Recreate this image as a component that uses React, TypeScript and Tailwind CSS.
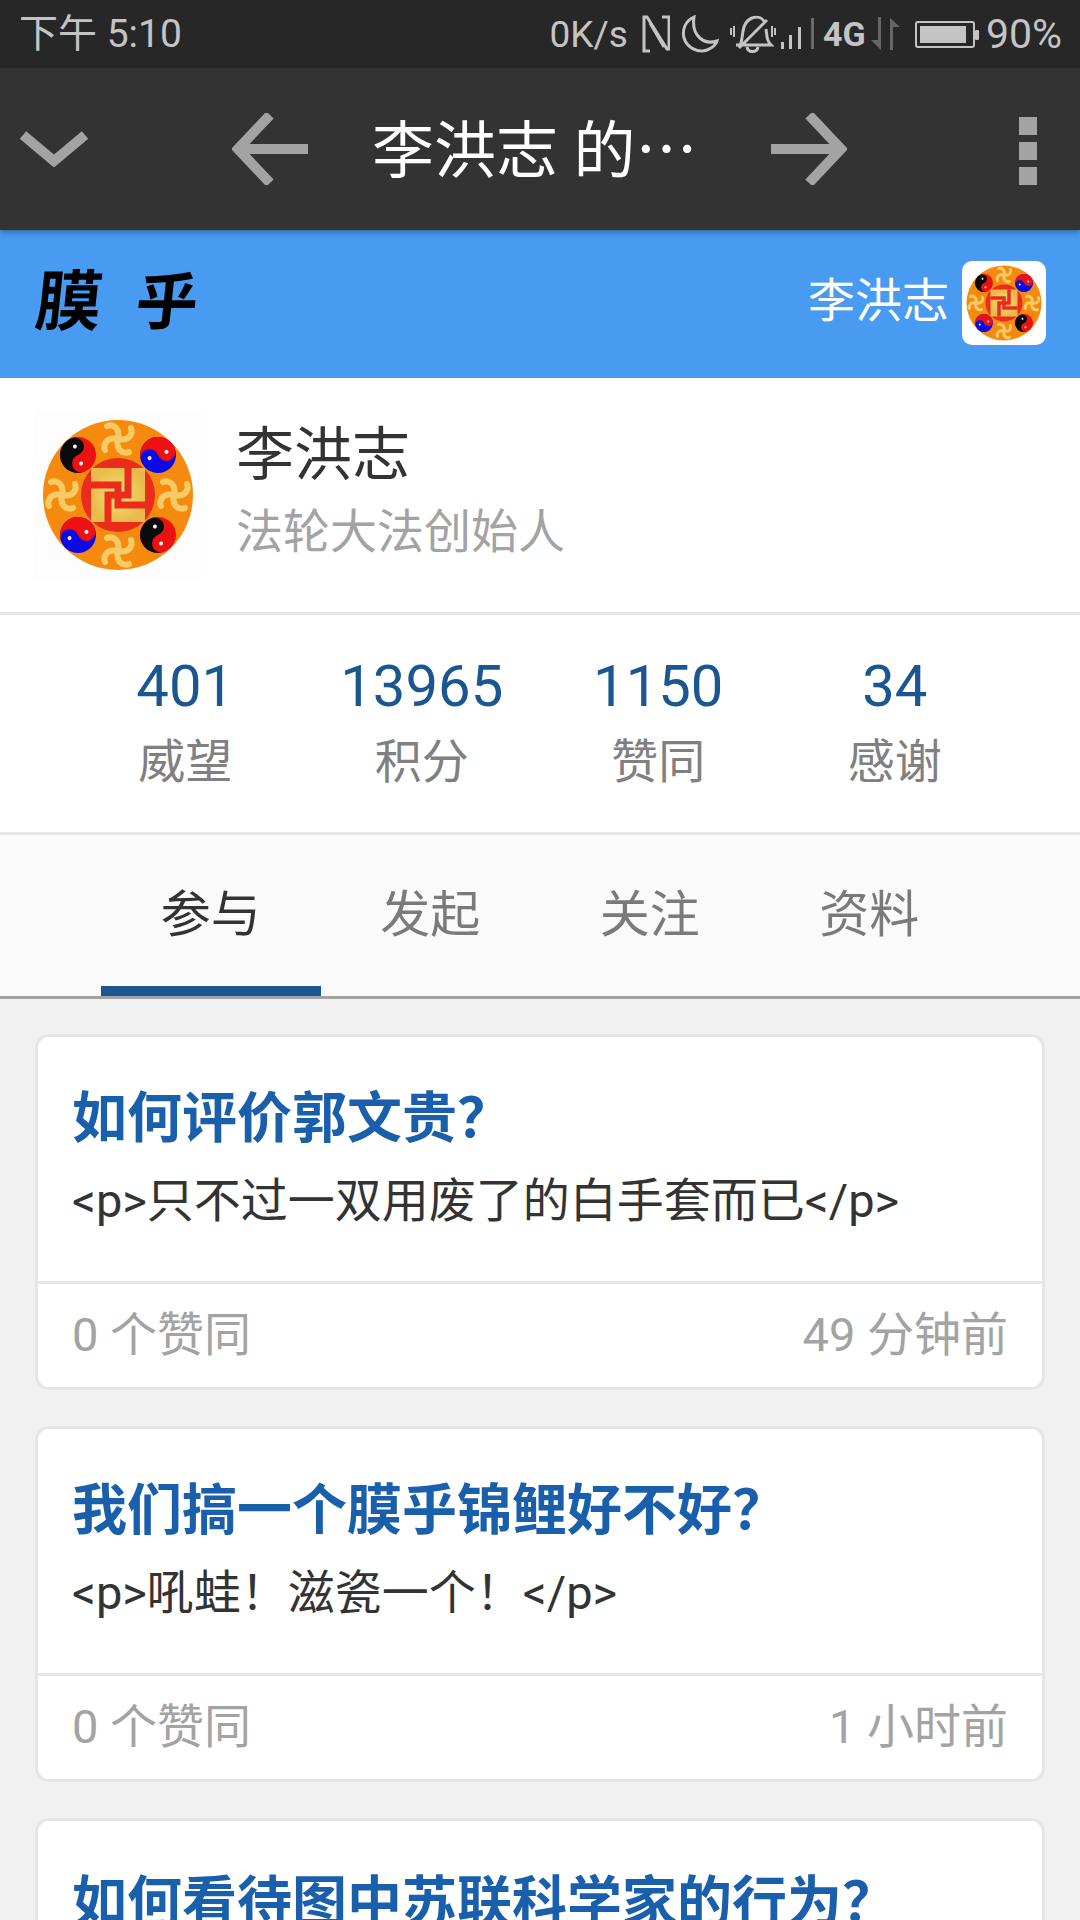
const fontStack = "font-['Roboto','Noto_Sans_CJK_SC',sans-serif]";

const Swirl = ({ x, y }: { x: number; y: number }) => (
  <g transform={`translate(${x} ${y})`} fill="none" stroke="#f6cb66" strokeWidth="6" strokeLinecap="round">
    {[0, 90, 180, 270].map((r) => (
      <path key={r} transform={`rotate(${r})`} d="M0 0 C1 -5 0 -10 -3 -12 C-6 -14 -9 -14 -11 -13" />
    ))}
  </g>
);

const Taiji = ({ x, y, rot, c1, c2 }: { x: number; y: number; rot: number; c1: string; c2: string }) => (
  <g transform={`translate(${x} ${y}) rotate(${rot}) scale(1 -1)`}>
    <circle r="18" fill={c2} />
    <path d="M0 -18 A18 18 0 0 0 0 18 A9 9 0 0 0 0 0 A9 9 0 0 1 0 -18 Z" fill={c1} />
    <circle cy="9" r="2" fill="#f4f4f4" />
    <circle cy="-9" r="2" fill="#f4f4f4" />
  </g>
);

// falun emblem, 168 box centred on 84,84
const Emblem = ({ className, viewBox = "0 0 168 168" }: { className: string; viewBox?: string }) => (
  <svg viewBox={viewBox} className={className}>
    <defs>
      <radialGradient id="gold">
        <stop offset="0%" stopColor="#f9e27a" />
        <stop offset="100%" stopColor="#e9bb4c" />
      </radialGradient>
    </defs>
    <circle cx="84" cy="84" r="75" fill="#f58a0e" />
    <Swirl x={84} y={28} />
    <Swirl x={140} y={84} />
    <Swirl x={84} y={140} />
    <Swirl x={28} y={84} />
    <Taiji x={44} y={44} rot={-20} c1="#0a0a0a" c2="#ee1111" />
    <Taiji x={124} y={124} rot={-20} c1="#0a0a0a" c2="#ee1111" />
    <Taiji x={124} y={44} rot={70} c1="#ee1111" c2="#0a0ae6" />
    <Taiji x={44} y={124} rot={70} c1="#ee1111" c2="#0a0ae6" />
    <circle cx="84" cy="84" r="37" fill="#ea2c1c" />
    <rect x="57" y="57" width="54" height="54" fill="url(#gold)" />
    <path
      d="M94 57 V84 H74 V111 M57 74 H84 V94 H111"
      fill="none"
      stroke="#ea2c1c"
      strokeWidth="7"
    />
  </svg>
);

const StatusIcons = () => (
  <>
    <svg viewBox="0 0 28 38" className="w-[28px] h-[38px] ml-[14px]" fill="none" stroke="#c4c4c4" strokeWidth="3">
      <path d="M8 36 H2 V2 H5 L25 34 H27 V2 H20 M8 8 L22 32" />
    </svg>
    <svg viewBox="0 0 38 38" className="w-[38px] h-[38px] ml-[11px]" fill="none" stroke="#c4c4c4" strokeWidth="3">
      <path d="M13 2 C4 6 1 15 3 23 C6 33 17 38 26 35 C31 33 35 30 36 26 C24 30 10 22 13 2 Z" />
    </svg>
    <svg viewBox="0 0 46 38" className="w-[46px] h-[38px] ml-[11px]" fill="none" stroke="#c4c4c4" strokeWidth="3">
      <path d="M10 30 C14 24 10 8 22 3 C28 1 33 3 35 8 M36 14 C37 22 37 26 41 30 H6 M17 32 C18 38 27 38 28 32 M9 33 L37 5" />
      <path d="M1 13 V20 M4 11 V22 M42 11 V22 M45 13 V20" strokeWidth="2" />
    </svg>
    <svg viewBox="0 0 34 32" className="w-[34px] h-[32px] ml-[5px]" fill="#c4c4c4">
      <rect x="0" y="24" width="3" height="7" />
      <rect x="8" y="17" width="3" height="14" />
      <rect x="17" y="9" width="3" height="22" />
      <rect x="30" y="0" width="3" height="31" fill="#6a6a6a" />
    </svg>
    <span className="ml-[8px] w-[42px] text-[34px] font-bold leading-none text-[#c4c4c4] whitespace-nowrap">4G</span>
    <svg viewBox="0 0 30 34" className="w-[30px] h-[34px] ml-[6px]" fill="#666666">
      <path d="M7 0 H10 V33 L0 23 H7 Z" />
      <path d="M19 1 L29 10 H22 V33 H19 Z" />
    </svg>
    <svg viewBox="0 0 64 27" className="w-[64px] h-[27px] ml-[14px]">
      <rect x="1" y="1" width="58" height="25" rx="2" fill="none" stroke="#c4c4c4" strokeWidth="2" />
      <rect x="5" y="5" width="46" height="17" fill="#c4c4c4" />
      <rect x="60" y="9" width="4" height="10" rx="1" fill="#c4c4c4" />
    </svg>
  </>
);

const Arrow = ({ flip }: { flip?: boolean }) => (
  <svg
    viewBox="0 0 76 72"
    className={flip ? "w-[76px] h-[72px] -scale-x-100" : "w-[76px] h-[72px]"}
    fill="none"
    stroke="#a3a3a3"
    strokeWidth="10"
  >
    <path d="M38 2 L6 36 L38 70 M6 36 H76" />
  </svg>
);

const stats = [
  { value: "401", label: "威望" },
  { value: "13965", label: "积分" },
  { value: "1150", label: "赞同" },
  { value: "34", label: "感谢" },
];

const tabs = ["参与", "发起", "关注", "资料"];

const posts = [
  { title: "如何评价郭文贵？", body: "<p>只不过一双用废了的白手套而已</p>", likes: "0 个赞同", time: "49 分钟前" },
  { title: "我们搞一个膜乎锦鲤好不好？", body: "<p>吼蛙！滋瓷一个！</p>", likes: "0 个赞同", time: "1 小时前" },
  { title: "如何看待图中苏联科学家的行为？", body: "", likes: "", time: "" },
];

export default function App() {
  return (
    <div className={`h-[1920px] w-[1080px] overflow-hidden bg-[#f1f1f1] ${fontStack}`}>
      <div className="h-[68px] bg-[#272727] flex items-center pl-[19px] pr-[18px] text-[#c4c4c4] text-[38px] leading-none">
        <span className="text-[39px]">下午 5:10</span>
        <span className="ml-auto text-[37px]">0K/s</span>
        <StatusIcons />
        <span className="ml-[7px] text-[41px]">90%</span>
      </div>

      <div className="relative z-10 h-[162px] bg-[#333333] flex items-center shadow-[0_2px_6px_rgba(0,0,0,0.35)]">
        <svg viewBox="0 0 68 36" className="w-[68px] h-[36px] ml-[20px]" fill="none" stroke="#a3a3a3" strokeWidth="10">
          <path d="M3 4 L34 30 L65 4" />
        </svg>
        <div className="ml-[144px]">
          <Arrow />
        </div>
        <span className="ml-[64px] w-[399px] pt-[6px] text-white text-[62px] leading-none whitespace-nowrap">李洪志 的⋯</span>
        <Arrow flip />
        <div className="ml-[172px] mt-[3px] flex flex-col gap-[7px]">
          <div className="w-[18px] h-[18px] bg-[#a3a3a3]" />
          <div className="w-[18px] h-[18px] bg-[#a3a3a3]" />
          <div className="w-[18px] h-[18px] bg-[#a3a3a3]" />
        </div>
      </div>

      <div className="h-[148px] bg-[#489bf1] flex items-center pl-[36px] pr-[34px] pb-[3px]">
        <span className="-skew-x-6 text-[66px] font-bold leading-none text-black">膜</span>
        <span className="ml-[34px] -skew-x-6 text-[62px] font-bold leading-none text-black">乎</span>
        <span className="ml-auto mb-[4px] text-white text-[47px] leading-none">李洪志</span>
        <div className="ml-[13px] w-[84px] h-[84px] rounded-[10px] bg-white flex items-center justify-center">
          <Emblem className="w-[76px] h-[76px]" viewBox="8 8 152 152" />
        </div>
      </div>

      <div className="h-[234px] bg-white flex items-center pl-[34px]">
        <div className="w-[168px] h-[168px] bg-[#fdfdfd]">
          <Emblem className="w-[168px] h-[168px]" />
        </div>
        <div className="ml-[34px] flex flex-col pb-[8px]">
          <span className="text-[58px] leading-[70px] text-[#333333]">李洪志</span>
          <span className="mt-[12px] text-[47px] leading-[60px] text-[#a3a3a3]">法轮大法创始人</span>
        </div>
      </div>

      <div className="h-[223px] bg-white border-y-[3px] border-[#e6e6e6] grid grid-cols-4 px-[67px] pt-[37px]">
        {stats.map((stat) => (
          <div key={stat.label} className="flex flex-col items-center">
            <span className="text-[58px] leading-[68px] text-[#1a5690]">{stat.value}</span>
            <span className="mt-[12px] text-[47px] leading-[60px] text-[#808080]">{stat.label}</span>
          </div>
        ))}
      </div>

      <div className="h-[164px] bg-[#fafafa] border-b-[3px] border-[#a3a3a3] grid grid-cols-4 px-[101px]">
        {tabs.map((tab, i) => (
          <div
            key={tab}
            className={
              i === 0
                ? "flex items-center justify-center text-[50px] text-[#333333] shadow-[inset_0_-10px_0_#1a5690]"
                : "flex items-center justify-center text-[50px] text-[#7a7a7a]"
            }
          >
            {tab}
          </div>
        ))}
      </div>

      <div className="flex flex-col gap-[36px] px-[35px] pt-[35px]">
        {posts.map((post) => (
          <div key={post.title} className="shrink-0 h-[356px] rounded-[14px] border-[3px] border-[#e6e6e6] bg-white flex flex-col">
            <div className="h-[244px] px-[34px] pt-[46px]">
              <div className="text-[55px] leading-[70px] font-bold text-[#1a5fab] whitespace-nowrap">{post.title}</div>
              <div className="mt-[13px] text-[47px] leading-[70px] text-[#333333] whitespace-nowrap">{post.body}</div>
            </div>
            <div className="flex-1 border-t-[3px] border-[#e6e6e6] flex items-center justify-between px-[34px] text-[47px] text-[#a3a3a3]">
              <span>{post.likes}</span>
              <span>{post.time}</span>
            </div>
          </div>
        ))}
      </div>
    </div>
  );
}
